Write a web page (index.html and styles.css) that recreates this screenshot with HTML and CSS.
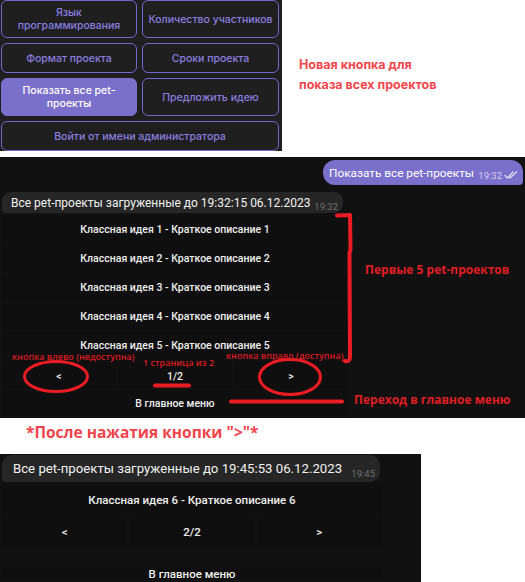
FILE: index.html
```html
<!DOCTYPE html>
<html lang="ru">
<head>
<meta charset="utf-8">
<link rel="stylesheet" href="styles.css">
</head>
<body>
<main class="page">
  <section class="top">
    <div class="kbd">
      <div class="kbtn">Язык<br>программирования</div>
      <div class="kbtn">Количество участников</div>
      <div class="kbtn">Формат проекта</div>
      <div class="kbtn">Сроки проекта</div>
      <div class="kbtn active">Показать все pet-<br>проекты</div>
      <div class="kbtn">Предложить идею</div>
      <div class="kbtn wide">Войти от имени администратора</div>
    </div>
    <p class="note">Новая кнопка для<br>показа всех проектов</p>
  </section>

  <section class="chat chat1">
    <div class="msg-out">
      <span class="out-text">Показать все pet-проекты</span>
      <span class="out-time">19:32</span>
      <svg class="ticks" width="14" height="8" viewBox="0 0 14 8"><path d="M1 4.5 L3.5 7 L9 1 M5.5 6.5 L6 7 L12.5 1" fill="none" stroke="#e6e2fb" stroke-width="1.2" stroke-linecap="round" stroke-linejoin="round"/></svg>
    </div>
    <div class="msg-in">
      <span class="in-text">Все pet-проекты загруженные до 19:32:15 06.12.2023</span>
      <span class="in-time">19:32</span>
    </div>
    <div class="ikbd">
      <div class="ibtn span3">Классная идея 1 - Краткое описание 1</div>
      <div class="ibtn span3">Классная идея 2 - Краткое описание 2</div>
      <div class="ibtn span3">Классная идея 3 - Краткое описание 3</div>
      <div class="ibtn span3">Классная идея 4 - Краткое описание 4</div>
      <div class="ibtn span3">Классная идея 5 - Краткое описание 5</div>
      <div class="ibtn nav">&lt;</div>
      <div class="ibtn nav">1/2</div>
      <div class="ibtn nav">&gt;</div>
      <div class="ibtn span3">В главное меню</div>
    </div>

    <svg class="marks" width="525" height="261" viewBox="0 0 525 261">
      <g fill="none" stroke="#ec1c24" stroke-linecap="round" stroke-linejoin="round">
        <path d="M337 58.5 L350 58 L350.5 92 L349.5 96 L350 200 Q350 205 345 204" stroke-width="4"/>
        <ellipse cx="56" cy="219.5" rx="31.5" ry="15" stroke-width="3"/>
        <ellipse cx="290" cy="220" rx="30.5" ry="17.5" stroke-width="3"/>
        <path d="M155 228.5 L189 228.5" stroke-width="4"/>
        <path d="M231 244.5 L342 244.5" stroke-width="4"/>
      </g>
    </svg>
    <span class="ann ann-first">Первые 5 pet-проектов</span>
    <span class="ann small ann-left">кнопка влево (недоступна)</span>
    <span class="ann small ann-right">кнопка вправо (доступна)</span>
    <span class="ann small ann-page">1 страница из 2</span>
    <span class="ann ann-menu">Переход в главное меню</span>
  </section>

  <h2 class="after">*После нажатия кнопки "&gt;"*</h2>

  <section class="chat chat2">
    <div class="msg-in big">
      <span class="in-text">Все pet-проекты загруженные до 19:45:53 06.12.2023</span>
      <span class="in-time">19:45</span>
    </div>
    <div class="ikbd big">
      <div class="ibtn span3">Классная идея 6 - Краткое описание 6</div>
      <div class="ibtn">&lt;</div>
      <div class="ibtn">2/2</div>
      <div class="ibtn">&gt;</div>
      <div class="ibtn span3 last">В главное меню</div>
    </div>
  </section>
</main>
</body>
</html>
```
FILE: styles.css
```css
* { box-sizing: border-box; }
html, body { margin: 0; padding: 0; background: #ffffff; }
body { width: 525px; height: 582px; overflow: hidden; font-family: Roboto, "Noto Sans", sans-serif; }
.page { display: flex; flex-direction: column; }

/* top keyboard */
.top { display: flex; align-items: flex-start; }
.kbd {
  width: 282px; height: 151px;
  background: #1f1f1f;
  padding: 0 3px 0 1px;
  display: grid;
  grid-template-columns: 136px 137px;
  grid-template-rows: 38px 30px 38px 30px;
  gap: 5px;
}
.kbtn {
  border: 1.5px solid #7466cf;
  border-radius: 6px;
  display: flex; align-items: center; justify-content: center;
  text-align: center;
  font-family: Inter, "Noto Sans", sans-serif;
  font-weight: 500;
  font-size: 10.5px;
  line-height: 13px;
  color: #8a7fe0;
}
.kbtn.active { background: #7a6fcb; border-color: #7a6fcb; color: #ffffff; }
.kbtn.wide { grid-column: 1 / 3; }
.note {
  margin: 0 0 0 17px;
  padding-top: 55px;
  font-family: Inter, "Open Sans", sans-serif;
  font-weight: 700;
  font-size: 12.5px;
  line-height: 19.5px;
  color: #f2474c;
}

/* chat screenshots */
.chat { background: #111111; position: relative; display: flex; flex-direction: column; }
.chat1 { margin-top: 6px; height: 261px; width: 525px; }
.chat2 { width: 421px; height: 128px; }

.msg-out {
  align-self: flex-end;
  margin: 3px 2px 0 0;
  height: 25px;
  width: 200px;
  background: #7a6fcb;
  border-radius: 12px 12px 4px 12px;
  display: flex; align-items: center;
  padding: 0 5px 0 6px;
  white-space: nowrap;
}
.out-text { color: #ffffff; font-size: 11.8px; }
.out-time { color: #d6d1f3; font-size: 9.5px; margin-left: auto; margin-top: 6px; }
.ticks { margin-left: 2px; margin-top: 5px; }

.msg-in {
  margin: 7px 0 0 2px;
  width: 341px; height: 21px;
  background: #262626;
  border-radius: 9px 9px 9px 4px;
  display: flex; align-items: center;
  padding: 0 5px 0 9px;
}
.in-text { color: #f2f2f2; font-size: 12px; white-space: nowrap; }
.in-time { color: #6f6f6f; font-size: 9.5px; margin-left: auto; margin-top: 7px; }

.ikbd {
  margin: 3px 0 0 2px;
  width: 346px;
  display: grid;
  grid-template-columns: repeat(3, 1fr);
  grid-auto-rows: 27px;
  gap: 2px;
}
.ibtn {
  background: #0f0f0f;
  border-radius: 4px;
  display: flex; align-items: center; justify-content: center;
  color: #f0f0f0;
  font-weight: 500;
  font-size: 10.5px;
}
.ibtn.nav { padding-top: 3px; }
.span3 { grid-column: 1 / 4; }

.msg-in.big { margin: 1px 0 0 2px; width: 378px; height: 27px; padding: 0 5px 0 11px; border-radius: 10px 10px 10px 4px; }
.msg-in.big .in-text { font-size: 13.2px; }
.msg-in.big .in-time { margin-top: 9px; }
.ikbd.big { width: 380px; grid-auto-rows: 30px; margin-top: 3px; }
.ikbd.big .ibtn { font-size: 11.5px; }
.ikbd.big .last { margin-top: 19px; }

/* annotations */
.marks { position: absolute; left: 0; top: 0; pointer-events: none; }
.ann {
  position: absolute;
  font-family: "Open Sans", "Noto Sans", sans-serif;
  font-weight: 700;
  color: #e01e24;
  white-space: nowrap;
  line-height: 1;
}
.ann.small { font-size: 9px; font-weight: 600; color: #dc1c22; }
.ann-first { left: 365px; top: 107px; font-size: 12px; }
.ann-menu { left: 354px; top: 237px; font-size: 12px; }
.ann-left { left: 12px; top: 195px; }
.ann-right { left: 226px; top: 194px; }
.ann-page { left: 143px; top: 201px; }

.after {
  margin: 0;
  padding: 4px 0 12px 26px;
  font-family: "Open Sans", "Noto Sans", sans-serif;
  font-weight: 700;
  font-size: 15.5px;
  line-height: 20px;
  color: #f0444a;
}
```
